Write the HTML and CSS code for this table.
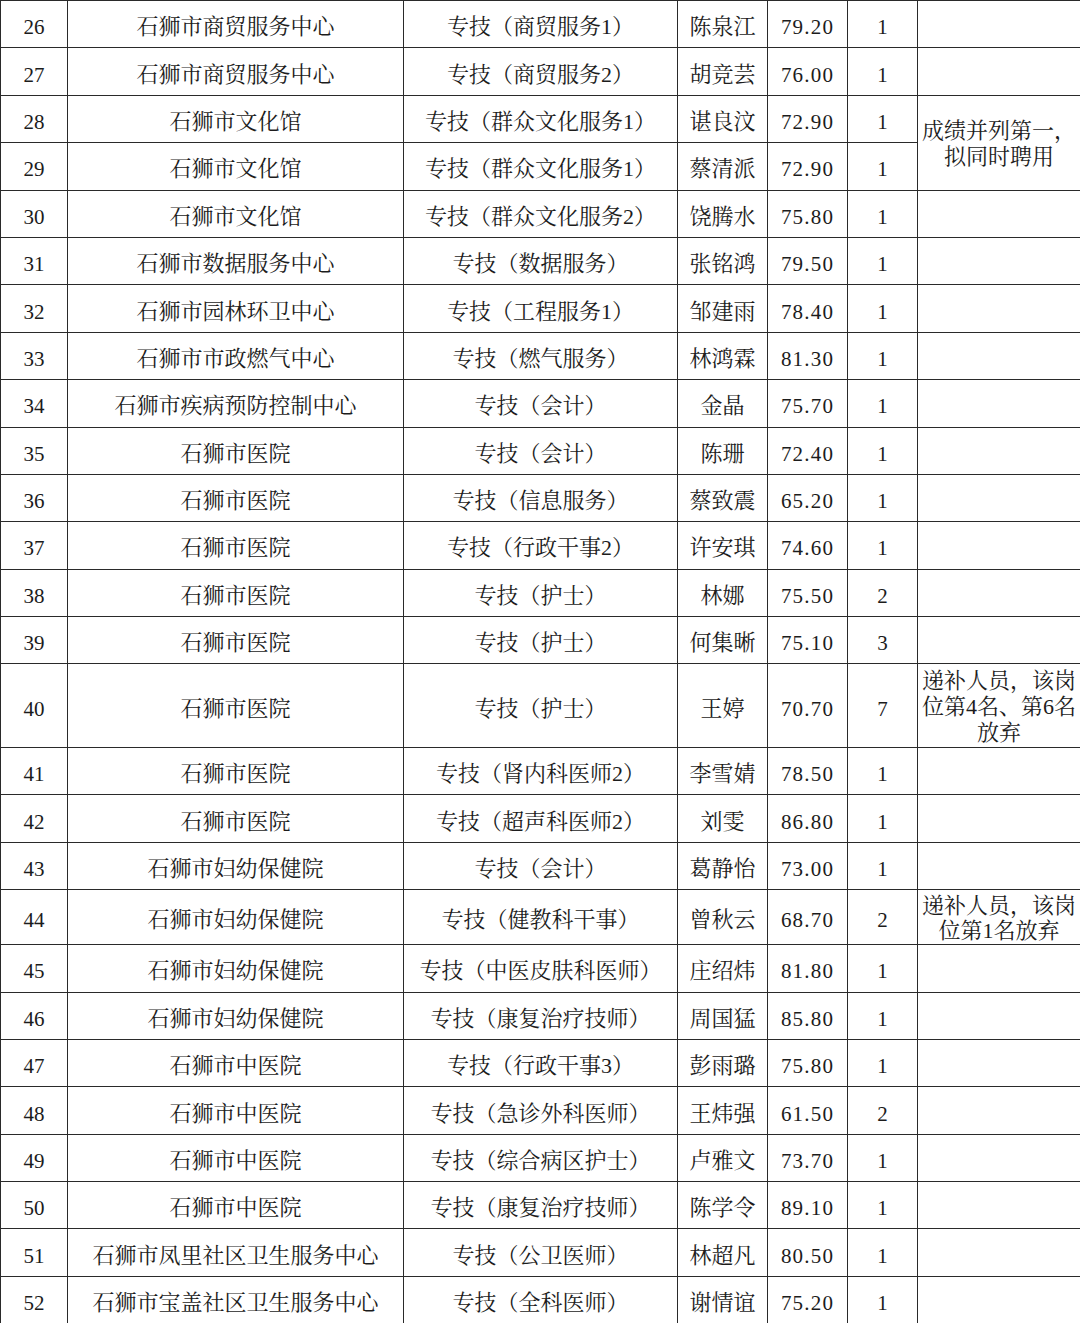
FILE: index.html
```html
<!DOCTYPE html>
<html lang="zh-CN">
<head>
<meta charset="utf-8">
<title>拟聘用人员名单</title>
<link rel="stylesheet" href="styles.css">
</head>
<body>
<table class="list">
<colgroup>
<col class="c-no"><col class="c-unit"><col class="c-post"><col class="c-name"><col class="c-score"><col class="c-rank"><col class="c-note">
</colgroup>
<tbody>
<tr><td class="num">26</td><td>石狮市商贸服务中心</td><td>专技（商贸服务1）</td><td>陈泉江</td><td class="score">79.20</td><td class="num">1</td><td></td></tr>
<tr><td class="num">27</td><td>石狮市商贸服务中心</td><td>专技（商贸服务2）</td><td>胡竞芸</td><td class="score">76.00</td><td class="num">1</td><td></td></tr>
<tr><td class="num">28</td><td>石狮市文化馆</td><td>专技（群众文化服务1）</td><td>谌良汶</td><td class="score">72.90</td><td class="num">1</td><td class="note" rowspan="2">成绩并列第一，拟同时聘用</td></tr>
<tr><td class="num">29</td><td>石狮市文化馆</td><td>专技（群众文化服务1）</td><td>蔡清派</td><td class="score">72.90</td><td class="num">1</td></tr>
<tr><td class="num">30</td><td>石狮市文化馆</td><td>专技（群众文化服务2）</td><td>饶腾水</td><td class="score">75.80</td><td class="num">1</td><td></td></tr>
<tr><td class="num">31</td><td>石狮市数据服务中心</td><td>专技（数据服务）</td><td>张铭鸿</td><td class="score">79.50</td><td class="num">1</td><td></td></tr>
<tr><td class="num">32</td><td>石狮市园林环卫中心</td><td>专技（工程服务1）</td><td>邹建雨</td><td class="score">78.40</td><td class="num">1</td><td></td></tr>
<tr><td class="num">33</td><td>石狮市市政燃气中心</td><td>专技（燃气服务）</td><td>林鸿霖</td><td class="score">81.30</td><td class="num">1</td><td></td></tr>
<tr><td class="num">34</td><td>石狮市疾病预防控制中心</td><td>专技（会计）</td><td>金晶</td><td class="score">75.70</td><td class="num">1</td><td></td></tr>
<tr><td class="num">35</td><td>石狮市医院</td><td>专技（会计）</td><td>陈珊</td><td class="score">72.40</td><td class="num">1</td><td></td></tr>
<tr><td class="num">36</td><td>石狮市医院</td><td>专技（信息服务）</td><td>蔡致震</td><td class="score">65.20</td><td class="num">1</td><td></td></tr>
<tr><td class="num">37</td><td>石狮市医院</td><td>专技（行政干事2）</td><td>许安琪</td><td class="score">74.60</td><td class="num">1</td><td></td></tr>
<tr><td class="num">38</td><td>石狮市医院</td><td>专技（护士）</td><td>林娜</td><td class="score">75.50</td><td class="num">2</td><td></td></tr>
<tr><td class="num">39</td><td>石狮市医院</td><td>专技（护士）</td><td>何集晰</td><td class="score">75.10</td><td class="num">3</td><td></td></tr>
<tr class="tall3"><td class="num">40</td><td>石狮市医院</td><td>专技（护士）</td><td>王婷</td><td class="score">70.70</td><td class="num">7</td><td class="note">递补人员，该岗位第4名、第6名放弃</td></tr>
<tr><td class="num">41</td><td>石狮市医院</td><td>专技（肾内科医师2）</td><td>李雪婧</td><td class="score">78.50</td><td class="num">1</td><td></td></tr>
<tr><td class="num">42</td><td>石狮市医院</td><td>专技（超声科医师2）</td><td>刘雯</td><td class="score">86.80</td><td class="num">1</td><td></td></tr>
<tr><td class="num">43</td><td>石狮市妇幼保健院</td><td>专技（会计）</td><td>葛静怡</td><td class="score">73.00</td><td class="num">1</td><td></td></tr>
<tr class="tall2"><td class="num">44</td><td>石狮市妇幼保健院</td><td>专技（健教科干事）</td><td>曾秋云</td><td class="score">68.70</td><td class="num">2</td><td class="note note-tight">递补人员，该岗位第1名放弃</td></tr>
<tr><td class="num">45</td><td>石狮市妇幼保健院</td><td>专技（中医皮肤科医师）</td><td>庄绍炜</td><td class="score">81.80</td><td class="num">1</td><td></td></tr>
<tr><td class="num">46</td><td>石狮市妇幼保健院</td><td>专技（康复治疗技师）</td><td>周国猛</td><td class="score">85.80</td><td class="num">1</td><td></td></tr>
<tr><td class="num">47</td><td>石狮市中医院</td><td>专技（行政干事3）</td><td>彭雨璐</td><td class="score">75.80</td><td class="num">1</td><td></td></tr>
<tr><td class="num">48</td><td>石狮市中医院</td><td>专技（急诊外科医师）</td><td>王炜强</td><td class="score">61.50</td><td class="num">2</td><td></td></tr>
<tr><td class="num">49</td><td>石狮市中医院</td><td>专技（综合病区护士）</td><td>卢雅文</td><td class="score">73.70</td><td class="num">1</td><td></td></tr>
<tr><td class="num">50</td><td>石狮市中医院</td><td>专技（康复治疗技师）</td><td>陈学令</td><td class="score">89.10</td><td class="num">1</td><td></td></tr>
<tr><td class="num">51</td><td>石狮市凤里社区卫生服务中心</td><td>专技（公卫医师）</td><td>林超凡</td><td class="score">80.50</td><td class="num">1</td><td></td></tr>
<tr><td class="num">52</td><td>石狮市宝盖社区卫生服务中心</td><td>专技（全科医师）</td><td>谢情谊</td><td class="score">75.20</td><td class="num">1</td><td></td></tr>
</tbody>
</table>
</body>
</html>
```

FILE: styles.css
```css
html, body {
  margin: 0;
  padding: 0;
  background: #ffffff;
}

body {
  width: 1080px;
  height: 1323px;
  overflow: hidden;
  font-family: "Liberation Serif", "Noto Serif CJK SC", "Noto Sans CJK SC", serif;
  color: #1c1c1c;
}

.list {
  width: 1080px;
  table-layout: fixed;
  border-collapse: collapse;
  font-size: 22px;
  text-spacing-trim: space-all;
}

.c-no { width: 67px; }
.c-unit { width: 336px; }
.c-post { width: 274px; }
.c-name { width: 90px; }
.c-score { width: 80px; }
.c-rank { width: 70px; }
.c-note { width: 163px; }

.list tr {
  height: 47.4px;
}

.list tr.tall3 {
  height: 83.5px;
}

.list tr.tall2 {
  height: 55px;
}

.list td {
  border: 1px solid #2a2a2a;
  padding: 6px 0 0 0;
  text-align: center;
  vertical-align: middle;
  line-height: 26px;
  white-space: nowrap;
}

.list td.num {
  font-size: 21px;
}

.list td.score {
  font-size: 21px;
  letter-spacing: 1.2px;
}

.list td.note {
  white-space: normal;
  font-size: 22px;
  padding: 3px 2px 0 2px;
  line-height: 26px;
}

.list td.note-tight {
  padding-top: 2px;
  line-height: 25px;
}
```
